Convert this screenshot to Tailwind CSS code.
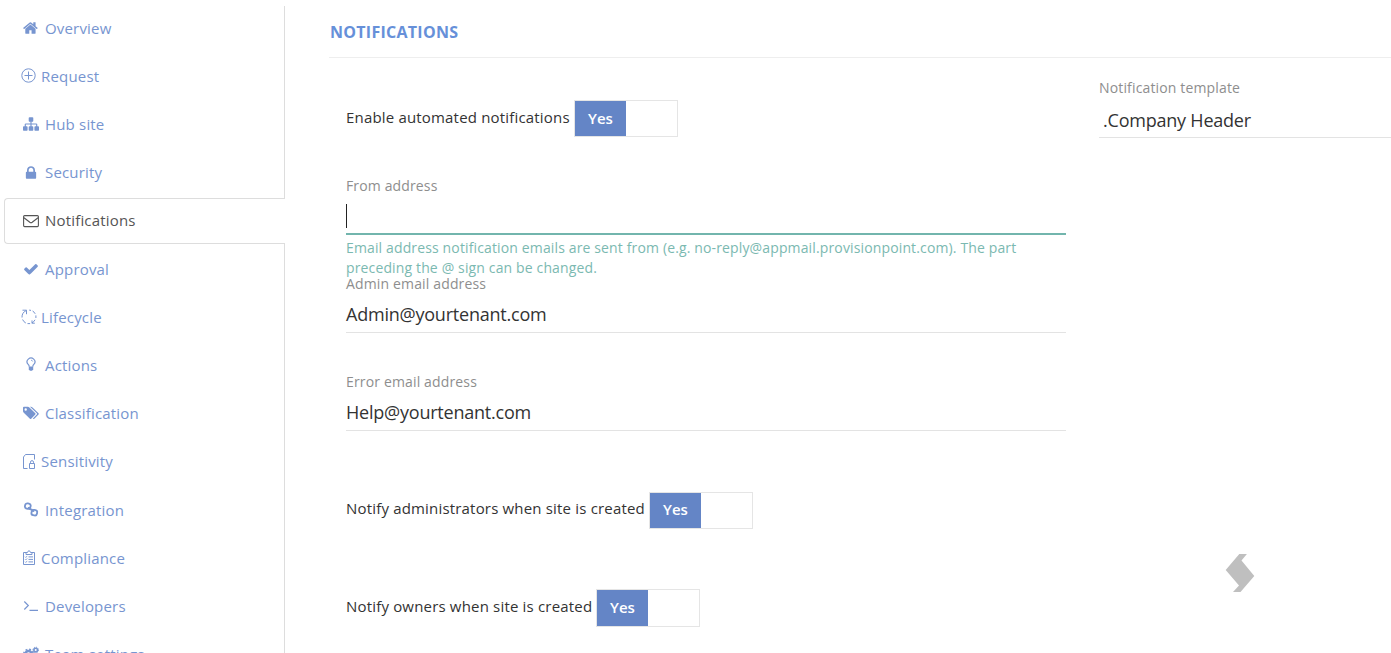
<!DOCTYPE html>
<html lang="en">
<head>
    <meta charset="UTF-8">
    <meta name="viewport" content="width=device-width, initial-scale=1.0">
    <title>Notifications</title>
    <script src="https://cdn.jsdelivr.net/npm/@tailwindcss/browser@4"></script>
</head>
<body class="bg-white h-screen overflow-hidden flex items-start font-['Open_Sans',sans-serif] text-[15px] tracking-[0.18px] text-[#333]">
    <!-- Side tabs -->
    <nav class="w-[281px] h-[647px] ml-1 mt-[6px] shrink-0 border-r border-[#ddd] text-[#7795d0]">
        <a class="flex items-center h-[46px] mb-[2.2px] -mt-[1.05px] pl-[19px]">
            <svg class="w-4 h-4 mr-1.5" viewBox="0 0 1792 1792" fill="currentColor"><path d="M1408 992v480q0 26-19 45t-45 19h-384v-384h-256v384h-384q-26 0-45-19t-19-45v-480q0-1 .5-3t.5-3l575-474 575 474q1 2 1 6zm223-69l-62 74q-8 9-21 11h-3q-13 0-21-7l-692-577-692 577q-12 8-24 7-13-2-21-11l-62-74q-8-10-7-23.5t11-21.5l719-599q32-26 76-26t76 26l244 204v-195q0-14 9-23t23-9h192q14 0 23 9t9 23v408l219 182q10 8 11 21.5t-7 23.5z"/></svg>
            <span>Overview</span>
        </a>
        <a class="flex items-center h-[46px] mb-[2.2px] pl-[17px]">
            <svg class="w-4 h-4 mr-1" viewBox="0 0 16 16" fill="none" stroke="currentColor"><circle cx="7.5" cy="7.5" r="6.7"/><path d="M7.5 3.5v8M3.5 7.5h8"/></svg>
            <span>Request</span>
        </a>
        <a class="flex items-center h-[46px] mb-[2.2px] pl-[19px]">
            <svg class="w-4 h-4 mr-1.5" viewBox="0 0 1792 1792" fill="currentColor"><path d="M1792 1248v320q0 40-28 68t-68 28h-320q-40 0-68-28t-28-68v-320q0-40 28-68t68-28h96v-192h-512v192h96q40 0 68 28t28 68v320q0 40-28 68t-68 28h-320q-40 0-68-28t-28-68v-320q0-40 28-68t68-28h96v-192h-512v192h96q40 0 68 28t28 68v320q0 40-28 68t-68 28h-320q-40 0-68-28t-28-68v-320q0-40 28-68t68-28h96v-192q0-52 38-90t90-38h512v-192h-96q-40 0-68-28t-28-68v-320q0-40 28-68t68-28h320q40 0 68 28t28 68v320q0 40-28 68t-68 28h-96v192h512q52 0 90 38t38 90v192h96q40 0 68 28t28 68z"/></svg>
            <span>Hub site</span>
        </a>
        <a class="flex items-center h-[46px] mb-[2.2px] pl-[19px]">
            <svg class="w-4 h-4 mr-1.5" viewBox="0 0 1792 1792" fill="currentColor"><path d="M640 768h512v-192q0-106-75-181t-181-75-181 75-75 181v192zm832 96v576q0 40-28 68t-68 28h-960q-40 0-68-28t-28-68v-576q0-40 28-68t68-28h32v-192q0-184 132-316t316-132 316 132 132 316v192h32q40 0 68 28t28 68z"/></svg>
            <span>Security</span>
        </a>
        <a class="flex items-center h-[46px] mb-[2.2px] -mr-px pl-[18px] bg-white border border-r-0 border-[#ddd] rounded-l text-[#555]">
            <svg class="w-4 h-4 mr-1.5" viewBox="0 0 16 16" fill="none" stroke="currentColor" stroke-width="1.1"><rect x=".6" y="2.6" width="14.8" height="11" rx="1"/><path d="M1 4.7l5.8 4.6q1.2.9 2.4 0L15 4.7"/></svg>
            <span>Notifications</span>
        </a>
        <a class="flex items-center h-[46px] mb-[2.2px] pl-[19px]">
            <svg class="w-4 h-4 mr-1.5" viewBox="0 0 1792 1792" fill="currentColor"><path d="M1671 566q0 40-28 68l-724 724-136 136q-28 28-68 28t-68-28l-136-136-362-362q-28-28-28-68t28-68l136-136q28-28 68-28t68 28l294 295 656-657q28-28 68-28t68 28l136 136q28 28 28 68z"/></svg>
            <span>Approval</span>
        </a>
        <a class="flex items-center h-[46px] mb-[2.2px] pl-[17px]">
            <svg class="w-4 h-4 mr-1" viewBox="0 0 16 16" fill="none" stroke="currentColor"><path d="M1.5 1.2h4v4M5.3 1.5Q.8 3.5 1 8.5M1.6 10.5q1 2.4 3.2 3.5M6.5 14.6h2.6M10.8 14q2.3-1.2 3.2-3.2M11 11.4v2.8h2.8M14.9 9V6.4M14.2 4.8q-.9-1.8-2.6-2.8M10 1.4L8.2 1.1"/></svg>
            <span>Lifecycle</span>
        </a>
        <a class="flex items-center h-[46px] mb-[2.2px] pl-[19px]">
            <svg class="w-4 h-4 mr-1.5" viewBox="0 0 16 16" fill="none" stroke="currentColor" stroke-width="1.2"><path d="M6.3 9.6Q6.1 8.3 5 7.2A3.9 3.7 0 1 1 11 7.2Q9.9 8.3 9.7 9.6"/><path d="M8 3.2q1.5.1 1.7 1.3" stroke-width=".8"/><path d="M5.8 9.4h4.4v3L9 13.7H7l-1.2-1.3z" fill="currentColor" stroke="none"/></svg>
            <span>Actions</span>
        </a>
        <a class="flex items-center h-[46px] mb-[2.2px] pl-[19px]">
            <svg class="w-4 h-4 mr-1.5" viewBox="0 0 16 16" fill="currentColor"><path fill-rule="evenodd" d="M0 2.8Q0 1.8 1 1.8h3.8q.9 0 1.6.7l5.9 5.8q.6.6 0 1.2l-4.1 4.2q-.7.6-1.3 0L.8 7.8Q0 7 0 6zM2.7 3.3a1.2 1.2 0 1 0 0 2.4 1.2 1.2 0 0 0 0-2.4z"/><path d="M7 1.8h.9q.9 0 1.6.7l6 5.8q.6.6 0 1.2l-4.2 4.2q-.8.6-1.4-.1l3.9-4q.6-.7 0-1.3z"/></svg>
            <span>Classification</span>
        </a>
        <a class="flex items-center h-[46px] mb-[2.2px] pl-[17px]">
            <svg class="w-4 h-4 mr-1" viewBox="0 0 16 16" fill="none" stroke="currentColor"><path d="M6.5 14.5h-4V3l2-2.5h9v5M8.5 9.5h5v5h-5zM9.5 9.3V8.2a1.5 1.6 0 0 1 3 0v1.1"/></svg>
            <span>Sensitivity</span>
        </a>
        <a class="flex items-center h-[46px] mb-[2.2px] pt-[0.4px] pl-[19px]">
            <svg class="w-4 h-4 mr-1.5" viewBox="0 0 16 16" fill="none" stroke="currentColor" stroke-width="1.8"><rect x="2" y="1.4" width="5.6" height="5.4" rx="2.2" transform="rotate(12 4.8 4.1)"/><rect x="8.5" y="8" width="5.6" height="5.4" rx="2.2" transform="rotate(12 11.3 10.7)"/><path d="M5.6 5q.8 2.2 2.5 2.4t2.5 2.4" stroke-width="2"/></svg>
            <span>Integration</span>
        </a>
        <a class="flex items-center h-[46px] mb-[2.2px] pl-[17px]">
            <svg class="w-4 h-4 mr-1" viewBox="0 0 16 16" fill="none" stroke="currentColor"><path d="M5 2.5H2.5v12h11v-12H11M5 4.5v-2h1.5Q6.8.8 8 .8t1.5 1.7H11v2zM7.5 6.9H12M7.5 9.4H12M7.5 11.9H12"/><path d="M4 6.7l.8.8 1.4-1.6M4 9.2l.8.8 1.4-1.6M4 11.7l.8.8 1.4-1.6" stroke-width=".8"/></svg>
            <span>Compliance</span>
        </a>
        <a class="flex items-center h-[46px] mb-[2.2px] pl-[19px]">
            <svg class="w-4 h-4 mr-1.5" viewBox="0 0 16 16" fill="none" stroke="currentColor" stroke-width="1.2"><path d="M1.3 3.5l4 4-4 4M6.5 12.4H15"/></svg>
            <span>Developers</span>
        </a>
        <a class="flex items-center h-[46px] pl-[19px]">
            <svg class="w-4 h-4 mr-1.5" viewBox="0 0 16 16" fill="none" stroke="currentColor"><circle cx="5.5" cy="8" r="3" stroke-width="2.6"/><circle cx="5.5" cy="8" r="4.7" stroke-width="1.6" stroke-dasharray="1.9 1.8"/><circle cx="12.7" cy="4" r="1.8" stroke-width="1.6"/><circle cx="12.7" cy="4" r="2.8" stroke-width="1" stroke-dasharray="1.2 1"/><circle cx="12.7" cy="12" r="1.8" stroke-width="1.6"/></svg>
            <span>Team settings</span>
        </a>
    </nav>

    <main class="flex-1 ml-11">
        <h1 class="h-[58px] pt-5 pl-px border-b border-[#eee] text-base leading-6 font-bold tracking-[0.27px] text-[#6690d9]">NOTIFICATIONS</h1>

        <div class="flex pl-[17px] pt-5">
            <div class="w-[720px] shrink-0">
                <div class="h-[98px] pt-[22px] flex items-start">
                    <label class="w-[228px] leading-[35px]">Enable automated notifications</label>
                    <div class="w-[104px] h-[37px] border border-[#e5e5e5]"><div class="w-[51px] h-full bg-[#6485c6] text-white font-semibold tracking-normal text-center leading-[34px]">Yes</div></div>
                </div>

                <div class="h-[98px] text-sm leading-5 tracking-[0.137px]">
                    <label class="block text-[#8e8e8e]">From address</label>
                    <div class="h-[39px] pt-2 border-b-2 border-[#72b5ad]"><div class="w-px h-6 bg-[#222]"></div></div>
                    <p class="pt-[3px] text-[#7bb9b1]">Email address notification emails are sent from (e.g. no-reply@appmail.provisionpoint.com). The part<br>preceding the @ sign can be changed.</p>
                </div>

                <div class="h-[98px]">
                    <label class="block text-sm leading-5 tracking-[0.15px] text-[#8e8e8e]">Admin email address</label>
                    <div class="h-[39px] pt-2 border-b border-[#e3e3e3] text-lg leading-6 tracking-[-0.22px]">Admin@yourtenant.com</div>
                </div>

                <div class="h-[98px]">
                    <label class="block text-sm leading-5 tracking-[0.15px] text-[#8e8e8e]">Error email address</label>
                    <div class="h-[39px] pt-2 border-b border-[#e3e3e3] text-lg leading-6 tracking-[-0.22px]">Help@yourtenant.com</div>
                </div>

                <div class="h-[97px] pt-[22px] flex items-start">
                    <label class="w-[303px] leading-[33px]">Notify administrators when site is created</label>
                    <div class="w-[104px] h-[37px] border border-[#e5e5e5]"><div class="w-[51px] h-full bg-[#6485c6] text-white font-semibold tracking-normal text-center leading-[33px]">Yes</div></div>
                </div>

                <div class="h-[60px] pt-[22px] flex items-start">
                    <label class="w-[250px] leading-[35px]">Notify owners when site is created</label>
                    <div class="w-[104px] h-[38px] border border-[#e5e5e5]"><div class="w-[51px] h-full bg-[#6485c6] text-white font-semibold tracking-normal text-center leading-[34px]">Yes</div></div>
                </div>
            </div>

            <div class="flex-1 ml-[33px]">
                <label class="block text-sm leading-5 tracking-[0.15px] text-[#8e8e8e]">Notification template</label>
                <div class="h-10 pt-[10px] pl-1 border-b border-[#e3e3e3] text-lg leading-6 tracking-[-0.22px]">.Company Header</div>
            </div>
        </div>
    </main>

    <!-- Floating logo mark -->
    <svg class="absolute left-[1225px] top-[554px] w-[30px] h-[38px]" viewBox="0 0 30 38" fill="#bfbfbf"><path d="M14.3 0h7.6L16.5 6.5 29.3 22 15.5 38H8l6-6.5L.7 16z"/></svg>
</body>
</html>
